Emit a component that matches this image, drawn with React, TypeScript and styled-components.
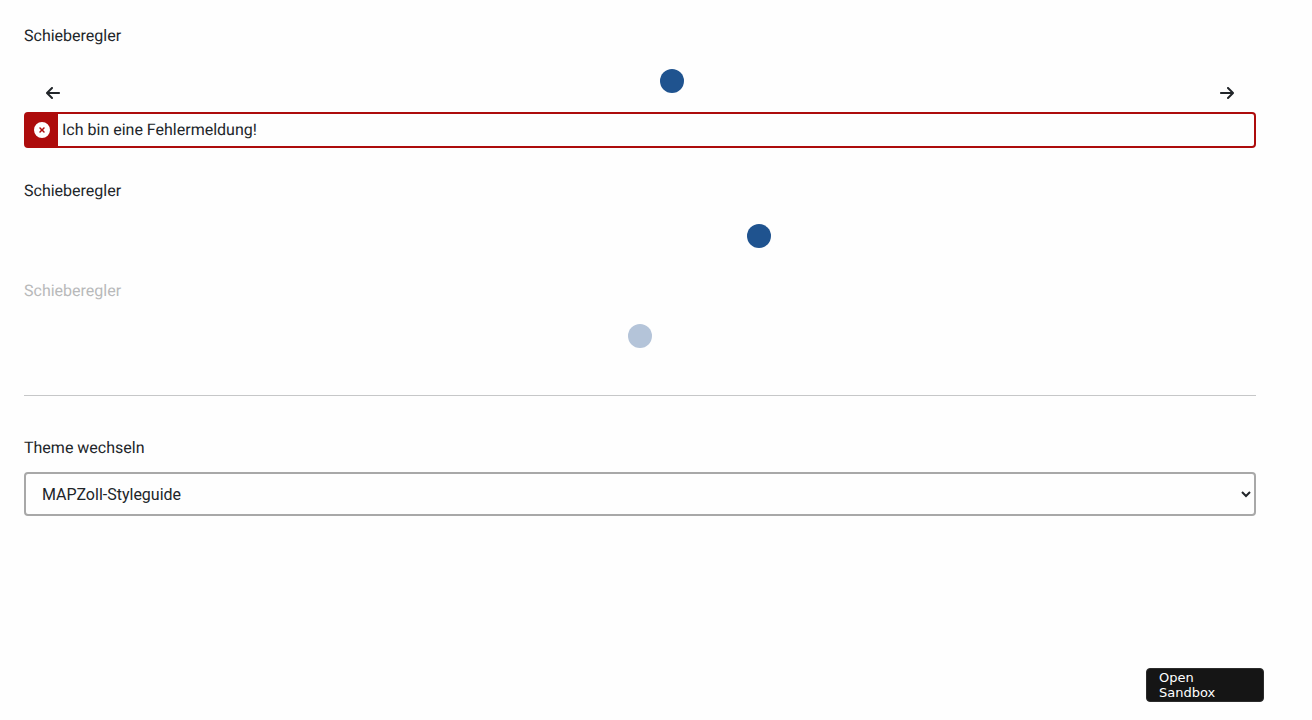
import React, { useState } from "react";
import styled, { createGlobalStyle } from "styled-components";
import { FaArrowLeft, FaArrowRight, FaCircleXmark } from "react-icons/fa6";

const GlobalStyle = createGlobalStyle`
  *, *::before, *::after {
    box-sizing: border-box;
  }

  body {
    margin: 0;
    background: #fefefe;
    color: #212529;
    font-family: Roboto, "Liberation Sans", sans-serif;
    font-size: 16px;
    line-height: 24px;
    text-rendering: geometricPrecision;
  }
`;

const Page = styled.main`
  padding: 24px 56px 24px 24px;
`;

const SliderList = styled.div`
  display: flex;
  flex-direction: column;
  gap: 31px;
`;

const Field = styled.div`
  display: flex;
  flex-direction: column;
`;

const Label = styled.label<{ $muted?: boolean }>`
  align-self: flex-start;
  color: ${({ $muted }) => ($muted ? "#b8b9ba" : "inherit")};
`;

const SliderRow = styled.div`
  display: flex;
  align-items: flex-start;
  margin-top: 21px;
`;

const Range = styled.input.attrs({ type: "range" })`
  appearance: none;
  flex: 1;
  min-width: 0;
  height: 24px;
  margin: 0 8px;
  background: transparent;
  cursor: pointer;

  &::-webkit-slider-runnable-track {
    height: 24px;
    background: transparent;
  }

  &::-webkit-slider-thumb {
    appearance: none;
    width: 24px;
    height: 24px;
    border: 0;
    border-radius: 50%;
    background: #1f538f;
  }

  &:disabled {
    cursor: default;
  }

  &:disabled::-webkit-slider-thumb {
    background: #b4c4d9;
  }
`;

const StepButton = styled.button`
  display: flex;
  align-items: center;
  justify-content: center;
  width: 58px;
  height: 24px;
  margin-top: 12px;
  padding: 0;
  border: 0;
  background: transparent;
  color: #212529;
  font-size: 16px;
  cursor: pointer;

  svg {
    width: 14px;
    height: 16px;
  }
`;

const ErrorMessage = styled.div`
  display: flex;
  margin-top: 7px;
  min-height: 36px;
  border: 2px solid #ad0c0c;
  border-radius: 4px;
`;

const ErrorIcon = styled.span`
  display: flex;
  align-items: center;
  justify-content: center;
  width: 32px;
  background: #ad0c0c;
  color: #ffffff;
  font-size: 16px;
`;

const ErrorText = styled.span`
  padding: 4px;
`;

const Divider = styled.hr`
  margin: 47px 0 40px;
  border: 0;
  border-top: 1px solid #c6c7c8;
`;

const Select = styled.select`
  width: 100%;
  height: 44px;
  margin-top: 12px;
  padding: 0 12px;
  border: 2px solid #a8a8a8;
  border-radius: 4px;
  background-color: #fefefe;
  color: #212529;
  font: inherit;
`;

const SandboxButton = styled.button`
  position: fixed;
  right: 48px;
  bottom: 18px;
  width: 118px;
  padding: 1px 40px 1px 12px;
  border: 1px solid #2b2b2b;
  border-radius: 4px;
  background: #151515;
  color: #ffffff;
  font-family: "DejaVu Sans", sans-serif;
  font-size: 13px;
  line-height: 15px;
  text-align: left;
  cursor: pointer;
`;

export default function App() {
  const [first, setFirst] = useState(53);
  const [second, setSecond] = useState(60);

  return (
    <>
      <GlobalStyle />
      <Page>
        <SliderList>
          <Field>
            <Label htmlFor="slider-steps">Schieberegler</Label>
            <SliderRow>
              <StepButton type="button" aria-label="Verringern" onClick={() => setFirst(Math.max(0, first - 1))}>
                <FaArrowLeft />
              </StepButton>
              <Range
                id="slider-steps"
                aria-describedby="slider-error"
                value={first}
                onChange={(e) => setFirst(Number(e.target.value))}
              />
              <StepButton type="button" aria-label="Erhöhen" onClick={() => setFirst(Math.min(100, first + 1))}>
                <FaArrowRight />
              </StepButton>
            </SliderRow>
            <ErrorMessage id="slider-error">
              <ErrorIcon>
                <FaCircleXmark />
              </ErrorIcon>
              <ErrorText>Ich bin eine Fehlermeldung!</ErrorText>
            </ErrorMessage>
          </Field>
          <Field>
            <Label htmlFor="slider-plain">Schieberegler</Label>
            <SliderRow>
              <Range id="slider-plain" value={second} onChange={(e) => setSecond(Number(e.target.value))} />
            </SliderRow>
          </Field>
          <Field>
            <Label htmlFor="slider-disabled" $muted>
              Schieberegler
            </Label>
            <SliderRow>
              <Range id="slider-disabled" defaultValue={50} disabled />
            </SliderRow>
          </Field>
        </SliderList>
        <Divider />
        <Field>
          <Label htmlFor="theme">Theme wechseln</Label>
          <Select id="theme">
            <option>MAPZoll-Styleguide</option>
          </Select>
        </Field>
      </Page>
      <SandboxButton type="button">Open Sandbox</SandboxButton>
    </>
  );
}
